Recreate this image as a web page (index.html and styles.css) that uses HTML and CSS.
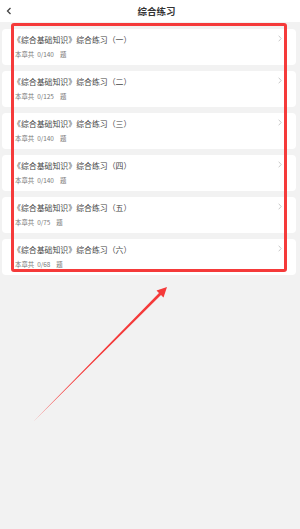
FILE: index.html
```html
<!DOCTYPE html>
<html lang="zh-CN">
<head>
    <meta charset="UTF-8">
    <meta name="viewport" content="width=device-width, initial-scale=1.0">
    <title>综合练习</title>
    <link rel="stylesheet" href="styles.css">
</head>
<body>
    <div class="header">
        <div class="back">
            <svg width="6" height="8" viewBox="0 0 6 8"><path d="M4.5 1 L1.5 4 L4.5 7" fill="none" stroke="#444" stroke-width="1.3"/></svg>
        </div>
        <div class="title">综合练习</div>
    </div>

    <div class="list">
        <div class="card">
            <div class="card-top">
                <span class="card-title">《综合基础知识》综合练习（一）</span>
                <svg class="arrow" width="4" height="7" viewBox="0 0 4 7"><path d="M0.7 0.7 L3.2 3.5 L0.7 6.3" fill="none" stroke="#c4c4c4" stroke-width="0.9"/></svg>
            </div>
            <div class="card-sub">本章共<span class="count">0/140</span><span class="unit">题</span></div>
        </div>
        <div class="card">
            <div class="card-top">
                <span class="card-title">《综合基础知识》综合练习（二）</span>
                <svg class="arrow" width="4" height="7" viewBox="0 0 4 7"><path d="M0.7 0.7 L3.2 3.5 L0.7 6.3" fill="none" stroke="#c4c4c4" stroke-width="0.9"/></svg>
            </div>
            <div class="card-sub">本章共<span class="count">0/125</span><span class="unit">题</span></div>
        </div>
        <div class="card">
            <div class="card-top">
                <span class="card-title">《综合基础知识》综合练习（三）</span>
                <svg class="arrow" width="4" height="7" viewBox="0 0 4 7"><path d="M0.7 0.7 L3.2 3.5 L0.7 6.3" fill="none" stroke="#c4c4c4" stroke-width="0.9"/></svg>
            </div>
            <div class="card-sub">本章共<span class="count">0/140</span><span class="unit">题</span></div>
        </div>
        <div class="card">
            <div class="card-top">
                <span class="card-title">《综合基础知识》综合练习（四）</span>
                <svg class="arrow" width="4" height="7" viewBox="0 0 4 7"><path d="M0.7 0.7 L3.2 3.5 L0.7 6.3" fill="none" stroke="#c4c4c4" stroke-width="0.9"/></svg>
            </div>
            <div class="card-sub">本章共<span class="count">0/140</span><span class="unit">题</span></div>
        </div>
        <div class="card">
            <div class="card-top">
                <span class="card-title">《综合基础知识》综合练习（五）</span>
                <svg class="arrow" width="4" height="7" viewBox="0 0 4 7"><path d="M0.7 0.7 L3.2 3.5 L0.7 6.3" fill="none" stroke="#c4c4c4" stroke-width="0.9"/></svg>
            </div>
            <div class="card-sub">本章共<span class="count">0/75</span><span class="unit">题</span></div>
        </div>
        <div class="card">
            <div class="card-top">
                <span class="card-title">《综合基础知识》综合练习（六）</span>
                <svg class="arrow" width="4" height="7" viewBox="0 0 4 7"><path d="M0.7 0.7 L3.2 3.5 L0.7 6.3" fill="none" stroke="#c4c4c4" stroke-width="0.9"/></svg>
            </div>
            <div class="card-sub">本章共<span class="count">0/68</span><span class="unit">题</span></div>
        </div>
    </div>

    <!-- annotation: highlight box + arrow -->
    <div class="highlight"></div>
    <svg class="pointer" width="300" height="529" viewBox="0 0 300 529">
        <polygon points="34,421 161,295 163.5,297.5 167,287 156.5,290.5 159,293" fill="#f53a3a"/>
    </svg>
</body>
</html>
```

FILE: styles.css
```css
body {
    margin: 0;
    background-color: #f2f2f2;
    font-family: "Noto Sans CJK SC", "Noto Sans", sans-serif;
    position: relative;
    min-height: 529px;
}
.header {
    display: flex;
    align-items: center;
    height: 22px;
    background-color: #fff;
}
.back {
    width: 13px;
    padding-left: 6px;
    display: flex;
    align-items: center;
}
.title {
    flex: 1;
    text-align: center;
    font-size: 9.5px;
    font-weight: bold;
    color: #333;
    padding-right: 6px;
}
.list {
    display: flex;
    flex-direction: column;
    gap: 6px;
    padding: 7px 4px 0 2px;
}
.card {
    background-color: #fff;
    border-radius: 4px;
    height: 36px;
    box-sizing: border-box;
    padding: 6px 14px 0 11px;
}
.card-top {
    display: flex;
    justify-content: space-between;
    align-items: center;
    height: 10px;
}
.card-title {
    font-size: 7.9px;
    color: #444;
    line-height: 10px;
}
.arrow {
    margin-top: -4px;
}
.card-sub {
    margin-top: 5px;
    padding-left: 2px;
    font-size: 6.4px;
    color: #777;
    line-height: 9px;
}
.count {
    margin-left: 3px;
}
.unit {
    margin-left: 6px;
}
.highlight {
    position: absolute;
    left: 11px;
    top: 23px;
    width: 276px;
    height: 249px;
    box-sizing: border-box;
    border: 3px solid #f53a3a;
    border-radius: 3px;
}
.pointer {
    position: absolute;
    left: 0;
    top: 0;
}
```
